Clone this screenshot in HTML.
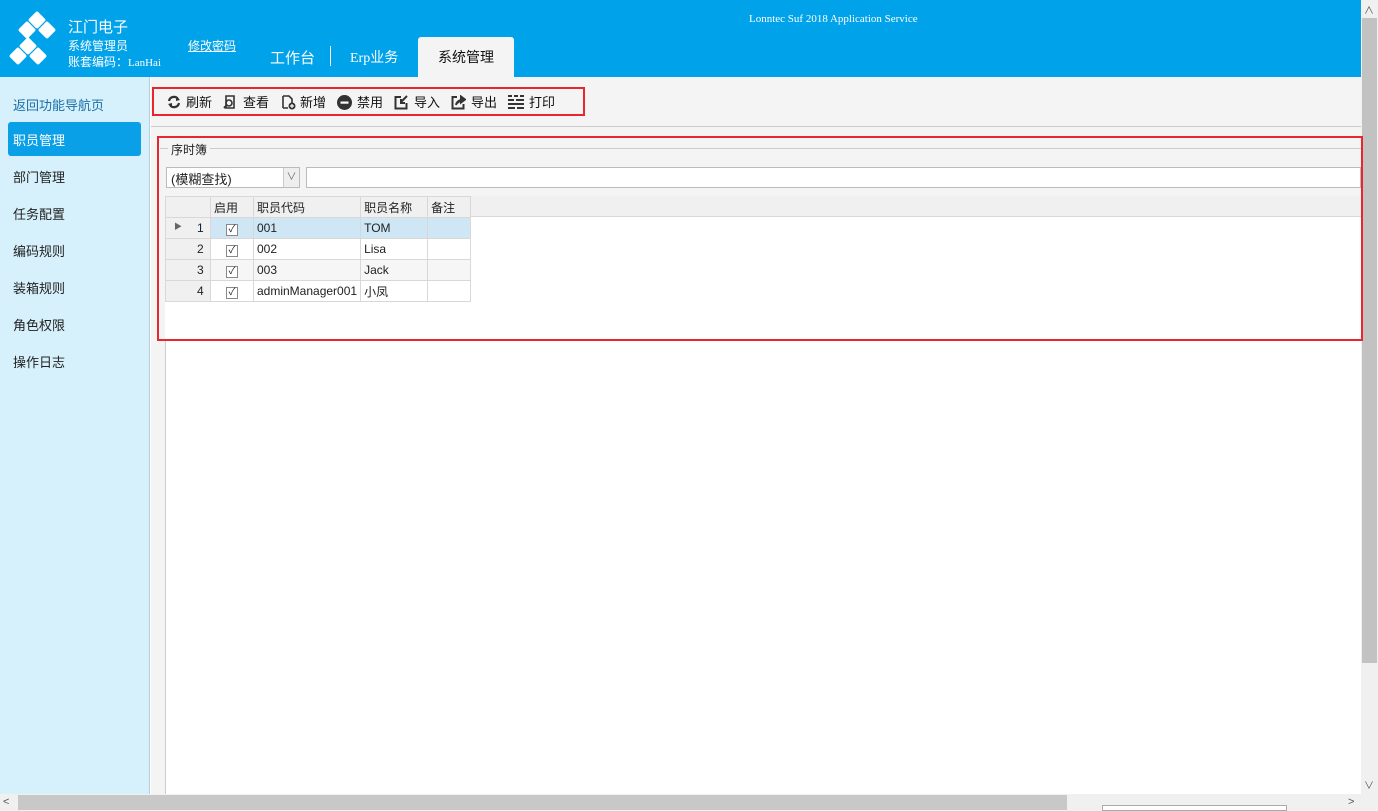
<!DOCTYPE html><html><head><meta charset="utf-8"><style>
*{margin:0;padding:0;box-sizing:border-box}
body{width:1378px;height:811px;overflow:hidden;position:relative;background:#fff;font-family:"Liberation Sans","Noto Sans CJK SC",sans-serif;font-size:12px;color:#222}
.a{position:absolute}
.hdr{left:0;top:0;width:1361px;height:77px;background:#00a2ea;color:#fff}
.side{left:0;top:77px;width:150px;height:717px;background:#d6f1fc;border-right:1px solid #bcd}
.side div{position:absolute;left:13px;font-size:13px;color:#222}
.tb span{position:absolute;top:92px;font-size:13px;color:#111}
.tb svg{position:absolute;top:95px}
table{border-collapse:collapse;font-size:12px}
td{border:1px solid #d8d8d8;height:21px;padding:0 3px;white-space:nowrap}
.cb{display:inline-block;width:12px;height:12px;border:1px solid #888;font-size:10px;line-height:10px;text-align:center;background:#fff}
</style></head><body>
<div class="a hdr">
 <svg class="a" style="left:0;top:0" width="60" height="70"><g fill="#fff">
 <rect x="-6.5" y="-6.5" width="13" height="13" rx="2" transform="translate(37 20) rotate(45)"/>
 <rect x="-6.5" y="-6.5" width="13" height="13" rx="2" transform="translate(27 30) rotate(45)"/>
 <rect x="-6.5" y="-6.5" width="13" height="13" rx="2" transform="translate(47 30) rotate(45)"/>
 <rect x="-6.5" y="-6.5" width="13" height="13" rx="2" transform="translate(28 46) rotate(45)"/>
 <rect x="-6.5" y="-6.5" width="13" height="13" rx="2" transform="translate(18 56) rotate(45)"/>
 <rect x="-6.5" y="-6.5" width="13" height="13" rx="2" transform="translate(38 56) rotate(45)"/>
 </g></svg>
 <div class="a" style="left:68px;top:16px;font-size:15px">江门电子</div>
 <div class="a" style="left:68px;top:37px;font-size:12px">系统管理员</div>
 <div class="a" style="left:68px;top:53px;font-size:12px">账套编码：<span style="font-family:'Liberation Serif',serif;font-size:11px">LanHai</span></div>
 <div class="a" style="left:188px;top:37px;font-size:12px;text-decoration:underline">修改密码</div>
 <div class="a" style="left:270px;top:47px;font-size:15px">工作台</div>
 <div class="a" style="left:330px;top:46px;width:1px;height:20px;background:#fff"></div>
 <div class="a" style="left:350px;top:47px;font-size:14px"><span style="font-family:'Liberation Serif',serif">Erp</span>业务</div>
 <div class="a" style="left:418px;top:37px;width:96px;height:40px;background:#f4f4f4;border-radius:3px 3px 0 0;color:#111;font-size:14px;text-align:center;line-height:40px">系统管理</div>
 <div class="a" style="left:749px;top:13px;font-family:'Liberation Serif',serif;font-size:11px">Lonntec Suf 2018 Application Service</div>
</div>
<div class="a side">
 <div style="top:18px;color:#1a6fa8">返回功能导航页</div>
 <div style="left:8px;top:45px;width:133px;height:34px;background:#0aa0e8;border-radius:3px;color:#fff;padding:8px 0 0 5px">职员管理</div>
 <div style="top:90px">部门管理</div><div style="top:127px">任务配置</div><div style="top:164px">编码规则</div><div style="top:201px">装箱规则</div><div style="top:238px">角色权限</div><div style="top:275px">操作日志</div>
</div>
<div class="a" style="left:151px;top:77px;width:1210px;height:717px;background:#f4f4f4"></div>
<div class="a" style="left:151px;top:126px;width:1210px;height:1px;background:#ccc"></div>
<div class="a" style="left:152px;top:87px;width:433px;height:29px;border:2px solid #e8262d"></div>
<div class="tb">
 <svg style="left:167px" width="14" height="14" viewBox="0 0 14 14"><path d="M2 6 A5 5 0 0 1 11 4 M12 8 A5 5 0 0 1 3 10" stroke="#333" stroke-width="2.2" fill="none"/><path d="M9 1 L13 5 L9 6Z M5 13 L1 9 L5 8Z" fill="#333"/></svg>
 <span style="left:186px">刷新</span>
 <svg style="left:223px" width="14" height="14" viewBox="0 0 14 14"><path d="M3 1 H11 V13 H3 Z" stroke="#333" stroke-width="1.6" fill="none"/><circle cx="6" cy="8" r="3" stroke="#333" stroke-width="1.6" fill="none"/><path d="M3 11 L1 13" stroke="#333" stroke-width="2"/></svg>
 <span style="left:243px">查看</span>
 <svg style="left:281px" width="15" height="15" viewBox="0 0 15 15"><path d="M2 1 H8 L11 4 V8 M7 13 H2 Z M2 1 V13" stroke="#333" stroke-width="1.6" fill="none"/><circle cx="11" cy="11" r="3.5" fill="#333"/><path d="M9 11 H13 M11 9 V13" stroke="#fff" stroke-width="1.2"/></svg>
 <span style="left:300px">新增</span>
 <svg style="left:337px" width="15" height="15" viewBox="0 0 15 15"><circle cx="7.5" cy="7.5" r="7.5" fill="#333"/><rect x="3.5" y="6.5" width="8" height="2.2" fill="#fff"/></svg>
 <span style="left:357px">禁用</span>
 <svg style="left:394px" width="15" height="15" viewBox="0 0 15 15"><path d="M7 2 H1.5 V13.5 H12.5 V8" stroke="#333" stroke-width="2" fill="none"/><path d="M13 1 L7 7 M7 4 V8 H11" stroke="#333" stroke-width="2" fill="none"/></svg>
 <span style="left:414px">导入</span>
 <svg style="left:451px" width="15" height="15" viewBox="0 0 15 15"><path d="M6 2 H1.5 V13.5 H12.5 V9" stroke="#333" stroke-width="2" fill="none"/><path d="M5 10 Q6 5 13 4.5 M10 1.5 L14 4.5 L10 7.5Z" stroke="#333" stroke-width="2" fill="#333"/></svg>
 <span style="left:471px">导出</span>
 <svg style="left:508px" width="16" height="15" viewBox="0 0 16 15"><g fill="#333"><rect x="0" y="0" width="4" height="2"/><rect x="6" y="0" width="4" height="2"/><rect x="12" y="0" width="4" height="2"/><rect x="0" y="4" width="6" height="2"/><rect x="8" y="4" width="8" height="2"/><rect x="0" y="8" width="16" height="2"/><rect x="0" y="12" width="7" height="2"/><rect x="9" y="12" width="7" height="2"/></g></svg>
 <span style="left:529px">打印</span>
</div>
<div class="a" style="left:165px;top:340px;width:1196px;height:454px;background:#fff;border-left:1px solid #ccc"></div>
<div class="a" style="left:160px;top:148px;width:1201px;height:1px;background:#ccc"></div>
<div class="a" style="left:168px;top:141px;background:#f4f4f4;padding:0 3px;font-size:12px">序时簿</div>
<div class="a" style="left:157px;top:136px;width:1206px;height:205px;border:2px solid #e8262d;z-index:5"></div>
<div class="a" style="left:166px;top:167px;width:134px;height:21px;border:1px solid #bbb;background:#fff;padding:1px 4px;font-size:13px">(模糊查找)</div>
<div class="a" style="left:283px;top:168px;width:16px;height:19px;background:#eee;border-left:1px solid #ccc;text-align:center;font-size:10px;color:#666;line-height:19px">∨</div>
<div class="a" style="left:306px;top:167px;width:1055px;height:21px;border:1px solid #bbb;background:#fff"></div>
<div class="a" style="left:165px;top:196px;width:1196px;height:144px;background:#fff"></div>
<div class="a" style="left:165px;top:196px;width:1196px;height:21px;background:#f0f0f0;border-bottom:1px solid #d8d8d8"></div>
<table class="a" style="left:165px;top:196px">
<tr style="background:#f0f0f0"><td style="width:45px"></td><td style="width:43px">启用</td><td style="width:106px">职员代码</td><td style="width:67px">职员名称</td><td style="width:43px">备注</td></tr>
<tr><td style="background:#f0f0f0;text-align:right;color:#123"><span style="float:left;color:#666;font-size:8px;padding-left:5px">▶</span>1&nbsp;</td><td style="background:#cfe6f5;text-align:center"><span class="cb">✓</span></td><td style="background:#cfe6f5">001</td><td style="background:#cfe6f5">TOM</td><td style="background:#cfe6f5"></td></tr>
<tr><td style="background:#f0f0f0;text-align:right">2&nbsp;</td><td style="text-align:center"><span class="cb">✓</span></td><td>002</td><td>Lisa</td><td></td></tr>
<tr><td style="background:#f0f0f0;text-align:right">3&nbsp;</td><td style="text-align:center;background:#f6f6f6"><span class="cb">✓</span></td><td style="background:#f6f6f6">003</td><td style="background:#f6f6f6">Jack</td><td style="background:#f6f6f6"></td></tr>
<tr><td style="background:#f0f0f0;text-align:right">4&nbsp;</td><td style="text-align:center"><span class="cb">✓</span></td><td>adminManager001</td><td>小凤</td><td></td></tr>
</table>
<div class="a" style="left:1361px;top:0;width:17px;height:794px;background:#f0f0f0"></div>
<div class="a" style="left:1362px;top:18px;width:15px;height:645px;background:#c2c2c2"></div>
<div class="a" style="left:1364px;top:2px;font-size:10px;color:#555">∧</div>
<div class="a" style="left:1364px;top:777px;font-size:10px;color:#555">∨</div>
<div class="a" style="left:0;top:794px;width:1378px;height:17px;background:#f0f0f0"></div>
<div class="a" style="left:18px;top:795px;width:1049px;height:15px;background:#c8c8c8"></div>
<div class="a" style="left:3px;top:796px;font-size:11px;color:#555">&lt;</div>
<div class="a" style="left:1348px;top:796px;font-size:11px;color:#555">&gt;</div>
<div class="a" style="left:1102px;top:805px;width:185px;height:6px;background:#fff;border:1px solid #aaa"></div>
</body></html>
